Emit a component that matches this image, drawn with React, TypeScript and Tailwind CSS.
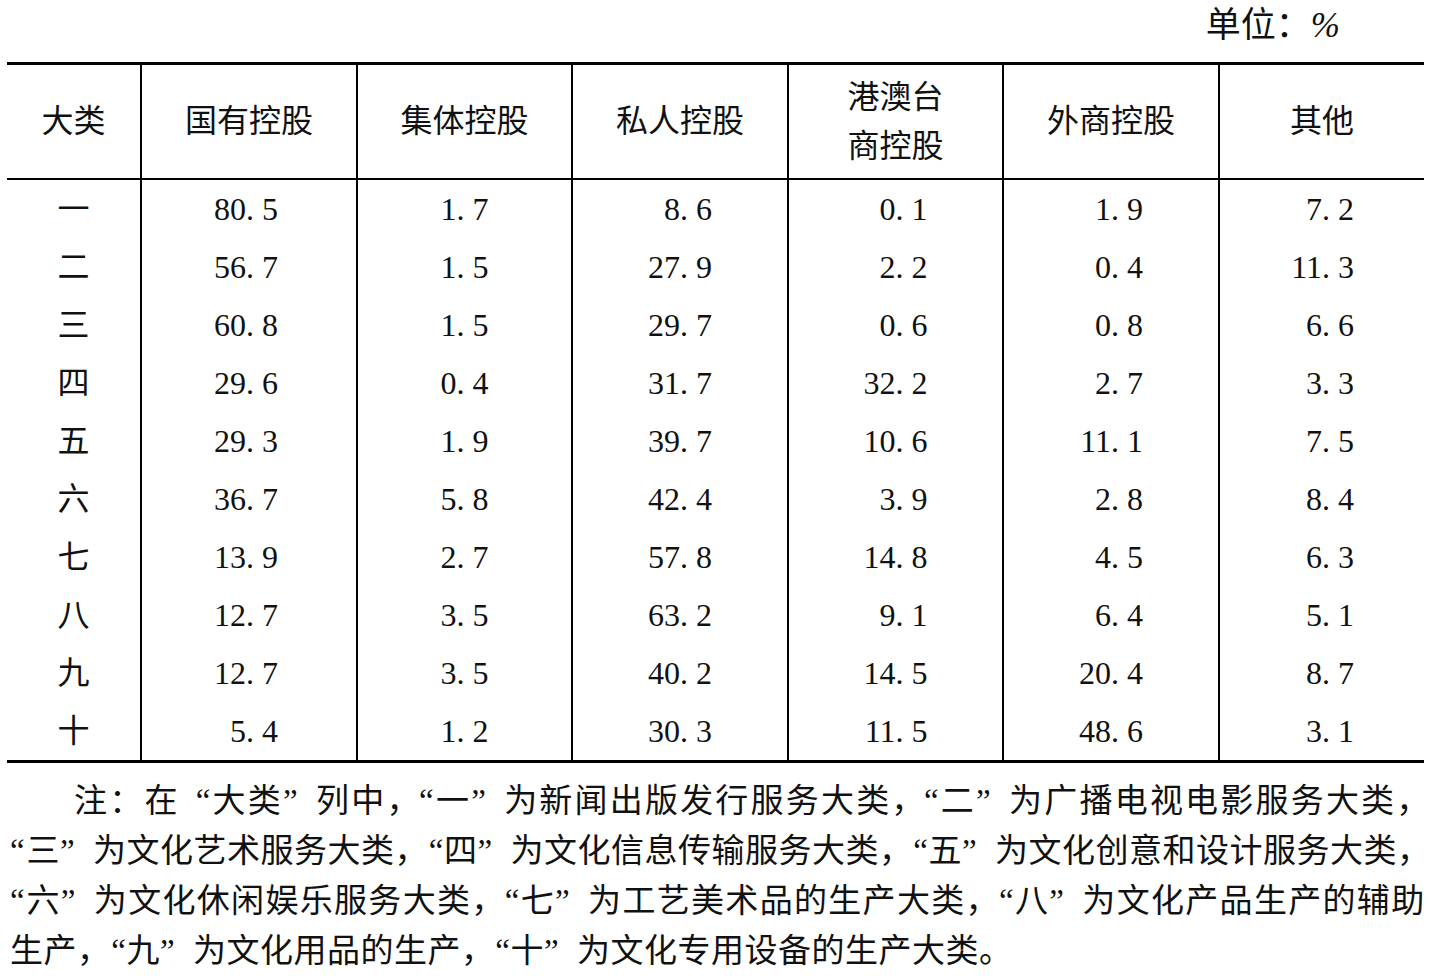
const font = "font-['Liberation_Serif','Noto_Sans_CJK_SC',serif]";

const headers = ["大类", "国有控股", "集体控股", "私人控股", "港澳台\n商控股", "外商控股", "其他"];

const rows: [string, string[]][] = [
  ["一", ["80.5", "1.7", "8.6", "0.1", "1.9", "7.2"]],
  ["二", ["56.7", "1.5", "27.9", "2.2", "0.4", "11.3"]],
  ["三", ["60.8", "1.5", "29.7", "0.6", "0.8", "6.6"]],
  ["四", ["29.6", "0.4", "31.7", "32.2", "2.7", "3.3"]],
  ["五", ["29.3", "1.9", "39.7", "10.6", "11.1", "7.5"]],
  ["六", ["36.7", "5.8", "42.4", "3.9", "2.8", "8.4"]],
  ["七", ["13.9", "2.7", "57.8", "14.8", "4.5", "6.3"]],
  ["八", ["12.7", "3.5", "63.2", "9.1", "6.4", "5.1"]],
  ["九", ["12.7", "3.5", "40.2", "14.5", "20.4", "8.7"]],
  ["十", ["5.4", "1.2", "30.3", "11.5", "48.6", "3.1"]],
];

// 每列若有两位整数，数值右对齐到同一宽度
const wide = [0, 1, 2, 3, 4, 5].map((c) => rows.some(([, v]) => parseFloat(v[c]) >= 10));

const gridCols = "grid grid-cols-[133px_216px_215px_216px_215px_216px_206px]";

function fmt(v: string) {
  const [a, b] = v.split(".");
  return `${a}. ${b}`;
}

const notes: [string, string][] = [
  ["注：在“大类”列中，“一”为新闻出版发行服务大类，“二”为广播电视电影服务大类，", "pl-[64px] tracking-[2.2px]"],
  ["“三”为文化艺术服务大类，“四”为文化信息传输服务大类，“五”为文化创意和设计服务大类，", "tracking-[0.5px]"],
  ["“六”为文化休闲娱乐服务大类，“七”为工艺美术品的生产大类，“八”为文化产品生产的辅助", "tracking-[1.3px]"],
  ["生产，“九”为文化用品的生产，“十”为文化专用设备的生产大类。", "tracking-[0.5px]"],
];

// 引号占全角位置；行首引号和“，“”连用时压缩半角
function NoteLine({ text }: { text: string }) {
  const chars = Array.from(text);
  return (
    <>
      {chars.map((ch, i) => {
        if (ch === "“")
          return i === 0 ? (
            <span key={i} className="inline-block w-[0.5em] text-left">“</span>
          ) : (
            <span key={i} className="inline-block w-[1em] text-right">“</span>
          );
        if (ch === "”")
          return (
            <span key={i} className="inline-block w-[1em] text-left">”</span>
          );
        if (ch === "，" && chars[i + 1] === "“")
          return (
            <span key={i} className="inline-block w-[0.5em]">，</span>
          );
        return ch;
      })}
    </>
  );
}

export default function App() {
  return (
    <div className={`w-[1430px] h-[976px] bg-white text-[#111] ${font} overflow-hidden`}>
      <div className="h-[62px] flex justify-end items-start pt-[6px] pr-[90px]">
        <span className="text-[35px] leading-[40px]">
          单位：<span className="italic">%</span>
        </span>
      </div>

      <div className="ml-[7px] w-[1417px] border-t-[3px] border-b-[3px] border-black">
        <div className={`${gridCols} h-[115px] border-b-2 border-black`}>
          {headers.map((h, i) => (
            <div
              key={h}
              className={`flex flex-col items-center justify-center text-[32px] leading-[49px] ${i > 0 ? "border-l-2 border-black" : ""}`}
            >
              {h.split("\n").map((l) => (
                <span key={l}>{l}</span>
              ))}
            </div>
          ))}
        </div>

        {rows.map(([k, vals]) => (
          <div key={k} className={`${gridCols} h-[58px]`}>
            <div className="flex items-center justify-center text-[32px]">{k}</div>
            {vals.map((v, c) => (
              <div key={c} className="flex items-center justify-center border-l-2 border-black text-[32px]">
                <span className={`inline-block text-right ${wide[c] ? "w-[64px]" : "w-[48px]"} ${c === 0 ? "-ml-[6px]" : ""}`}>
                  {fmt(v)}
                </span>
              </div>
            ))}
          </div>
        ))}
      </div>

      <div className="mt-[13px] ml-[10px] w-[1420px] text-[33px]">
        {notes.map(([n, cls], i) => (
          <div key={i} className={`h-[50px] leading-[50px] whitespace-nowrap ${cls}`}>
            <NoteLine text={n} />
          </div>
        ))}
      </div>
    </div>
  );
}
